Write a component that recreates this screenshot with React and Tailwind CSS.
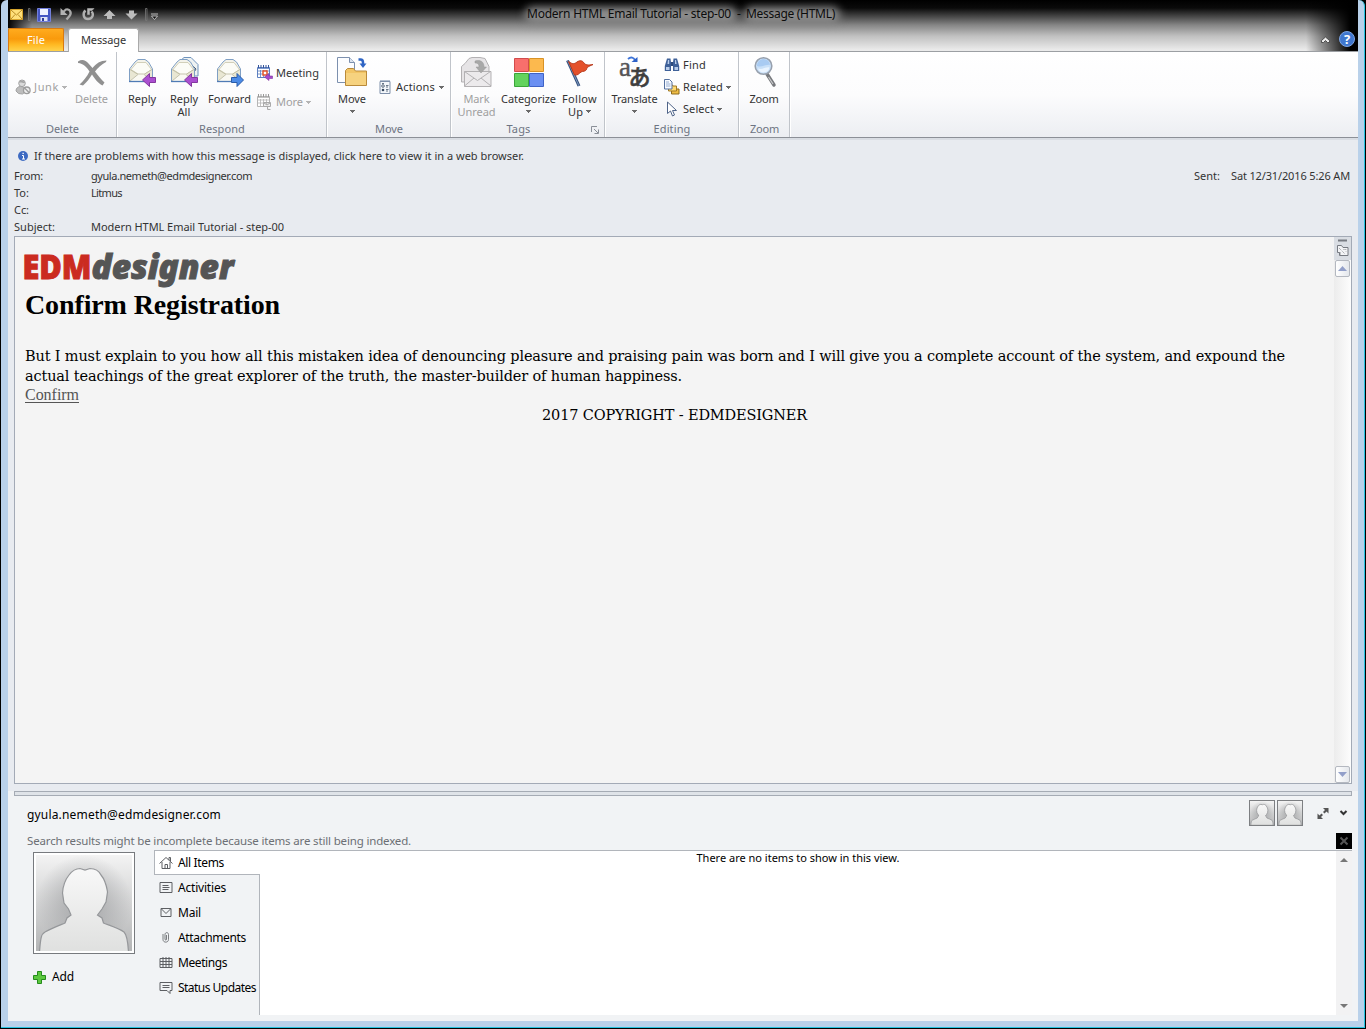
import { useLayoutEffect, useRef } from "react";

const UI = "font-['Noto_Sans','Open_Sans',sans-serif]";

/* Single line of text whose tracking is adjusted so that it fills `w` pixels. */
function Fit({ w, className = "", children }) {
  const ref = useRef(null);
  useLayoutEffect(() => {
    const el = ref.current;
    el.style.letterSpacing = "0px";
    const natural = el.getBoundingClientRect().width;
    el.style.letterSpacing = (w - natural) / String(children).length + "px";
  }, [w, children]);
  return (
    <span ref={ref} className={"inline-block whitespace-pre " + className}>
      {children}
    </span>
  );
}

function Arrow({ dim }) {
  return (
    <svg width="5" height="3" viewBox="0 0 5 3" className="shrink-0" shapeRendering="crispEdges">
      <path d="M0 0h5v1h-1v1h-1v1h-1v-1h-1v-1h-1z" fill={dim ? "#b4b4b4" : "#6a6a6a"} />
    </svg>
  );
}

function Group({ label, lw, width, launcher, children }) {
  return (
    <div className={"flex h-[85px] flex-col border-r border-[#c0c4ca] shadow-[1px_0_0_#fff] " + width}>
      <div className="flex h-[69px]">{children}</div>
      <div className={"relative flex h-4 items-center justify-center text-[#6d7482] " + (launcher ? "pr-[18px]" : "pl-[1px]")}>
        <Fit w={lw}>{label}</Fit>
        {launcher && (
          <svg className="absolute right-[5px] top-[5px]" width="8" height="8" viewBox="0 0 8 8" fill="none" stroke="#8a8f98">
            <path d="M0.5 6V0.5H6" />
            <path d="M3 3l4 4M7.5 3.5v4h-4" />
          </svg>
        )}
      </div>
    </div>
  );
}

function Big({ icon, lines, width, dim, arrow }) {
  return (
    <div className={"flex shrink-0 flex-col items-center pt-1 " + width + (dim ? " text-[#a0a0a0]" : "")}>
      <div className="flex h-8 w-8 shrink-0 items-center justify-center">{icon}</div>
      <div className="mt-[4px] h-[13px] leading-[13px]">
        <Fit w={lines[0][1]}>{lines[0][0]}</Fit>
      </div>
      <div className="flex h-[13px] items-center gap-[3px] leading-[13px]">
        {lines[1] && <Fit w={lines[1][1]}>{lines[1][0]}</Fit>}
        {arrow && <Arrow />}
      </div>
    </div>
  );
}

function Small({ icon, text, w, arrow, dim }) {
  return (
    <div className={"flex h-4 items-center gap-[3px]" + (dim ? " text-[#a0a0a0]" : "")}>
      <div className="w-4 shrink-0">{icon}</div>
      <Fit w={w}>{text}</Fit>
      {arrow && <Arrow dim={dim} />}
    </div>
  );
}

function MailIcon({ all, forward }) {
  return (
    <svg width="32" height="32" viewBox="0 0 32 32">
      {all && <path d="M11 6l5-4.500h7L30 8.500V20h-8" fill="#eef2f2" stroke="#6f93bd" />}
      {all && <path d="M25 10l3 3-3 5" fill="none" stroke="#4d5c70" />}
      <path d="M3.500 13L9 6l3-2.500h7L22.500 6l4 7v12.500h-23z" fill="#f4f3ea" stroke="#7f9fc4" />
      <path d="M5 13.500L11 6.500h9l5.500 7-8 5.500h-4z" fill="#fcfcf6" stroke="#d2d0ba" />
      <path d="M4 13.500l9 5.500h4l9-5.500v11.500H4z" fill="#e9e7d3" />
      <path d="M4 13.500l9 5.500h4l9-5.500" fill="none" stroke="#c2c0a6" />
      <path d="M4 25l8.500-7h5l8.500 7" fill="#faf9f2" stroke="#c6c4ae" />
      <path d="M3 25.500h24" stroke="#4f7bb5" strokeWidth="1.300" />
      {forward ? (
        <path d="M17.500 21.500h5.500v-4l6.500 6.500-6.500 6.500v-4h-5.500z" fill="#4c8be6" stroke="#2a5ca8" />
      ) : (
        <path d="M29.500 21.500h-6v-4l-7 6.500 7 6.500v-4h6z" fill="#aa4fd0" stroke="#84379f" />
      )}
    </svg>
  );
}

function CalendarIcon({ dim }) {
  const c = dim ? "#b5b5b5" : "#5c7fc0";
  return (
    <svg width="16" height="16" viewBox="0 0 16 16">
      <path d="M.5 2.500h12v10H.5z" fill="#fff" stroke={c} />
      <path d="M.5 3.500h12M1 6h11M1 9h11M3.500 5v7M6.500 5v7M9.500 5v7" stroke={c} strokeWidth=".8" />
      <path d="M1.500 0v3M4 0v3M6.500 0v3M9 0v3M11.500 0v3" stroke={dim ? "#999" : "#34549a"} />
      {dim ? (
        <path d="M6.500 8.500h7v4h-7zM7 9l3 2 3-2M10.500 13v2.500h3" fill="#eee" stroke="#aaa" />
      ) : (
        <g>
          <path d="M6 6h4v4H6z" fill="#fff" stroke="#e2552b" strokeWidth="1.500" />
          <path d="M15.500 11H12V8.500L7.500 12l4.500 3.500V13.500h3.500z" fill="#a54acb" stroke="#8236a0" strokeWidth=".6" />
        </g>
      )}
    </svg>
  );
}

function JunkIcon() {
  return (
    <svg width="16" height="16" viewBox="0 0 16 16">
      <path d="M1 12c0-3 2-4.500 4.500-4.500S11 9 11.500 12l-4 3-4-.5z" fill="#bdbdbd" stroke="#a2a2a2" />
      <circle cx="7" cy="4.300" r="3.300" fill="#dadada" stroke="#a2a2a2" />
      <path d="M4 3.500c1-2.500 5-2.500 6 .5-2 .5-3-1-6-.5z" fill="#a5a5a5" />
      <circle cx="11.800" cy="11.300" r="3.300" fill="#eee" stroke="#9c9c9c" strokeWidth="1.300" />
      <path d="M9.500 9l4.800 4.800" stroke="#9c9c9c" strokeWidth="1.300" />
    </svg>
  );
}

function DeleteIcon() {
  return (
    <svg width="32" height="32" viewBox="0 0 32 32">
      <path d="M2 5.500C6 3 9.500 4 12.500 7.500L16.500 12C20 7.500 24.500 4.500 30.500 4.500L30 6C25.500 8.500 22 11.500 19 15.500C22 19.500 25.500 24 28.500 26.500L26.500 29.500C21.500 27 19 23 16 18.500C13.500 22.500 10.500 26.500 7 29.500L3.500 28.500C7.500 25 11 20.500 13.500 15.500C10.500 11 7.500 7.500 2 7z" fill="#909090" />
    </svg>
  );
}

function MoveIcon() {
  return (
    <svg width="32" height="32" viewBox="0 0 32 32">
      <path d="M1.500 1.500h12l5 5v20h-17z" fill="#fcfdff" stroke="#7c90ae" />
      <path d="M13.500 1.500v5h5" fill="#dbe4f1" stroke="#7c90ae" />
      <path d="M9.500 29.500v-15l2-2h6l2 2.500h11v14.500z" fill="#f2c566" stroke="#b98a3a" />
      <path d="M10 17h20v12H10z" fill="#f6d27f" />
      <path d="M22.500 3.500h2c1.500 0 2.500 1 2.500 3V8" fill="none" stroke="#2f65c4" strokeWidth="2.500" />
      <path d="M23.500 7.500h7L27 12z" fill="#2f65c4" />
    </svg>
  );
}

function UnreadIcon() {
  return (
    <svg width="32" height="32" viewBox="0 0 32 32" fill="#e6e4e6" stroke="#b3b1b3">
      <path d="M.500 10.500L4 7.500l4-5 3-1h8l5 1 4 8v15.500H.500z" />
      <path d="M3.500 15.500h26.500v15H3.500z" fill="#eceaec" />
      <path d="M3.500 15.500l13 9 13-9M3.500 30l9.500-8M30 30l-10-8" fill="none" />
      <path d="M14 5c6-1.500 9 1 9 6h2.500L20 17l-5-6h3c0-3-1-4-4-4z" fill="#a8a8a8" stroke="#999" strokeWidth=".5" />
    </svg>
  );
}

function CategorizeIcon() {
  return (
    <svg width="32" height="32" viewBox="0 0 32 32">
      <path d="M1.500 2.500h14v13h-14z" fill="#f86f6c" stroke="#d24c4c" />
      <path d="M16.500 2.500h14v13h-14z" fill="#fcb94e" stroke="#d99225" />
      <path d="M1.500 17.500h14v13h-14z" fill="#63d35d" stroke="#3ba53a" />
      <path d="M16.500 17.500h14v13h-14z" fill="#6a8ff2" stroke="#3f63c6" />
    </svg>
  );
}

function FlagIcon() {
  return (
    <svg width="32" height="32" viewBox="0 0 32 32">
      <path d="M3.500 4.500L15 30" stroke="#35527f" strokeWidth="3" />
      <path d="M3.500 4.500L15 30" stroke="#7c95bb" strokeWidth="1" />
      <path d="M4.500 5.500c4 3 6 2.500 8.500.5 3-2 5.500-1.500 7 1 1.500 2 4 2.500 9 1.500-4.500 2-6 2.500-6.500 5-1 2-3.500 1.500-5.500 2.500-2 1.500-3 3.500-6.500 3z" fill="#e4512b" stroke="#b93a1c" />
    </svg>
  );
}

function TranslateIcon() {
  return (
    <svg className="overflow-visible" width="48" height="40" viewBox="-8 -4 48 40">
      <text x="0" y="20" fontSize="27" fontFamily="Liberation Serif, serif" fill="#555" stroke="#555" strokeWidth=".4">a</text>
      <text x="9.500" y="28.500" fontSize="22" fontWeight="500" fontFamily="Noto Sans CJK JP, sans-serif" fill="#3e3e3e" stroke="#3e3e3e" strokeWidth=".6">あ</text>
      <path d="M9 3c3-2.500 5.500-1.500 7 1" fill="none" stroke="#3e74d8" strokeWidth="2" />
      <path d="M12.500 6h6V1z" fill="#2d61c8" />
    </svg>
  );
}

function ZoomIcon() {
  return (
    <svg width="32" height="32" viewBox="0 0 32 32">
      <path d="M19 18l7 11" stroke="#77797d" strokeWidth="3.500" strokeLinecap="round" />
      <path d="M20.500 21l4.500 7" stroke="#c9cacc" strokeWidth="1.200" />
      <circle cx="15.500" cy="10" r="8.300" fill="#c9e0f8" stroke="#97a0ad" strokeWidth="1.600" />
      <path d="M9 10a6.500 6.500 0 0 1 13-1c-4-1-8 3-13 1z" fill="#a9cbf2" />
      <path d="M10 12.500c5 1.500 8-2 11.500-1a6 6 0 0 1-11.500 1z" fill="#eaf4ff" />
    </svg>
  );
}

function ActionsIcon() {
  return (
    <svg width="12" height="14" viewBox="0 0 12 14">
      <path d="M1 1.500h10v12H1z" fill="#f4f7fb" stroke="#7f90aa" />
      <path d="M1 .5h10" stroke="#b4c0d0" />
      <circle cx="4" cy="6" r="1.300" fill="#fff" stroke="#34465e" strokeWidth=".8" />
      <circle cx="4" cy="10" r="1.300" fill="#34465e" />
      <path d="M7 5.500h2.500M7 7h2M7 9.500h2.500M7 11h2M3 3.500h2" stroke="#45566c" strokeWidth=".8" />
    </svg>
  );
}

function FindIcon() {
  return (
    <svg width="16" height="16" viewBox="0 0 16 16">
      <path d="M3 1.500h3.500l.5 4V14H.8V9zM13 1.500H9.500l-.5 4V14h6.200V9z" fill="#3f6199" />
      <path d="M7 5h2v4H7z" fill="#2e4b7c" />
      <path d="M2 10h3.500v3H2zM10.500 10H14v3h-3.500zM4 3h1.200v4H3.500zM11 3h1l.6 4H11z" fill="#b9cdea" />
    </svg>
  );
}

function RelatedIcon() {
  return (
    <svg width="16" height="16" viewBox="0 0 16 16">
      <path d="M7.500 8.500h3l1 1.500h3.500v5H7.500z" fill="#f0bd45" stroke="#8d6a1f" />
      <path d="M4.500 5.500h3.500l1 1.500h3.500v5h-8z" fill="#ffd970" stroke="#a17a25" />
      <path d="M.5.500h5l2.500 2.500v7H.5z" fill="#f7faff" stroke="#55719f" />
      <path d="M2 3h3M2 5h4.500M2 7h4.500" stroke="#7e9ac5" strokeWidth=".8" />
    </svg>
  );
}

function SelectIcon() {
  return (
    <svg width="16" height="16" viewBox="0 0 16 16">
      <path d="M3.500 1v11.500l3-2.500 2 5 2-1-2-4.500h4z" fill="#fff" stroke="#4f6488" strokeWidth="1" />
    </svg>
  );
}

function Person({ size, id }) {
  return (
    <svg width={size} height={size} viewBox="0 0 96 96">
      <defs>
        <linearGradient id={id + "b"} x1="0" y1="0" x2="0" y2="1"><stop offset="0" stopColor="#f3f3f3" /><stop offset="1" stopColor="#b4b5b6" /></linearGradient>
        <radialGradient id={id + "r"} cx=".5" cy=".5" r=".5"><stop offset=".4" stopColor="#8b8d90" stopOpacity=".4" /><stop offset="1" stopColor="#8b8d90" stopOpacity="0" /></radialGradient>
        <linearGradient id={id + "p"} x1="0" y1="0" x2="0" y2="1"><stop offset="0" stopColor="#f8f8f8" /><stop offset="1" stopColor="#dfe0df" /></linearGradient>
      </defs>
      <path d="M0 0h96v96H0z" fill={`url(#${id}b)`} />
      <path d="M0 0h96v96H0z" fill={`url(#${id}r)`} />
      <path d="M3.500 97C4.500 84 5 79 9 77C16 73 23 70.500 29 68L31 63L35 60L32.500 54L28 48L26.500 38C27 30 29 25 33 20C36 16 39 13.500 44 13.500L49 15L54 13.500C60 13.500 63 16 65 20C70 26 70.500 31 71.500 37L70 47L66 54L61.500 60L66 63L67.500 68C75 71 82 73 88 77C91 80 92 88 92.500 97Z" fill={`url(#${id}p)`} stroke="#95979a" strokeWidth={size < 40 ? 3 : 1.2} />
    </svg>
  );
}

const tabIcons = {
  home: <path d="M0 7.500L6.500 1.500 13 7.500M9.500 4V1.500h1.500v4M2.500 6v6.500h8V6M5.500 12.500v-4h2.500v4" />,
  list: <path d="M.5 1.500h12v10H.5zM3 4.500h6M3 6.500h7M3 8.500h6" />,
  mail: <path d="M1.500 2.500h10v8h-10zM2 3l4.500 4.500L11 3" />,
  clip: <path d="M3.500 3v5.500c0 3.500 5.500 3.500 5.500 0v-5c0-2.500-3.500-2.500-3.500 0v4.500c0 1.500 1.500 1.500 1.500 0V4" strokeWidth=".8" />,
  grid: <path d="M.5 2.500h12v9H.5zM.5 5.500h12M.5 8.500h12M3.500 1v10.500M6.500 1v10.500M9.500 1v10.500" />,
  chat: <path d="M.5 1.500h12v8h-2v3l-3-3h-7zM3 4.500h7M3 6.500h7" />,
};

const tabs = [
  ["home", "All Items", 46],
  ["list", "Activities", 48],
  ["mail", "Mail", 23],
  ["clip", "Attachments", 68],
  ["grid", "Meetings", 49],
  ["chat", "Status Updates", 78],
];

function TitleBar() {
  return (
    <div className="relative h-[52px] border-b border-[#9c9fa3] bg-[linear-gradient(to_bottom,#000_0px,#0a0a0a_8px,#3c3c3c_15px,#858585_25px,#c0c0c0_36px,#ebebeb_50px)]">
      <div className="absolute inset-y-0 right-0 w-[52px] bg-[linear-gradient(to_right,transparent,#000_85%)]" />
      <div className="absolute left-0 top-0 h-7 w-6 bg-[linear-gradient(to_right,#000,transparent)]" />
      <div className="absolute left-[517px] top-[7px] h-[16px] w-[212px] rounded-full bg-[#8e8e8e] blur-[4px]" />
      <div className="absolute left-[736px] top-[7px] h-[16px] w-[96px] rounded-full bg-[#8e8e8e] blur-[4px]" />
      <div className="relative flex h-[28px]">
        <svg width="160" height="28" viewBox="8 0 160 28">
          <path d="M10.500 9.500h12v10h-12z" fill="#ffe07a" stroke="#d7a52d" />
          <path d="M11 10l5.500 5 5.500-5M11 19l4-4.500M22 19l-4-4.500" fill="none" stroke="#b98c25" />
          <path d="M28.500 8.500h1.500v12h-1.500zM145.500 8.500h1.500v12h-1.500z" fill="none" stroke="#777" strokeWidth=".8" />
          <path d="M37.500 8.500h13v13h-13z" fill="#4556c4" stroke="#7380da" />
          <path d="M40 9h8v6h-8z" fill="#eef1ff" />
          <path d="M40.500 17h7v4h-7z" fill="#dfe3f5" />
          <path d="M42 18h2v3h-2z" fill="#303c98" />
          <path d="M62 13l4-3.500c4-1 6 3.500 3.500 6.500l-3 3.500" fill="none" stroke="#a9a9a9" strokeWidth="2.300" />
          <path d="M60.500 8v7h7z" fill="#b3b3b3" />
          <path d="M85.500 10.500c-3 2.500-2.500 8.500 2.500 8.500s6-5 3.500-7.500" fill="none" stroke="#b0b0b0" strokeWidth="2.400" />
          <path d="M87.500 8.500h6.500l-2 2h-2.500v4h-2z" fill="#b8b8b8" stroke="#b8b8b8" strokeWidth=".5" />
          <path d="M109.500 10l6 6h-3.500v3h-5v-3h-3.500z" fill="#bcbcbc" />
          <path d="M131.500 19.500l6-6h-3.500v-3h-5v3h-3.500z" fill="#bcbcbc" />
          <path d="M151 14h7M151.500 16h6l-3 3.500z" fill="#111" stroke="#ddd" strokeWidth=".8" />
        </svg>
        <div className="absolute left-[519px] top-[5px] flex h-[18px] items-center text-[12px] leading-[18px] text-[#0c0c0c]">
          <Fit w={204}>Modern HTML Email Tutorial - step-00</Fit>
          <Fit w={4} className="ml-[6px]">-</Fit>
          <Fit w={89} className="ml-[5px]">Message (HTML)</Fit>
        </div>
      </div>
      <div className="relative flex h-[23px]">
        <div className="flex w-14 items-center justify-center rounded-t-[2px] border border-b-0 border-[#d97a10] bg-[linear-gradient(to_bottom,#ffab1e,#f99a0c_45%,#ffb822_70%,#ffd24a)] text-white">
          <Fit w={18}>File</Fit>
        </div>
        <div className="ml-[4px] flex h-[24px] w-[71px] items-center justify-center rounded-t-[3px] border border-b-0 border-[#aaa] bg-white">
          <Fit w={45}>Message</Fit>
        </div>
        <svg className="ml-auto" width="44" height="23" viewBox="0 0 44 23">
          <path d="M7.500 14.500v-2L11.500 9l4 3.500v2h-2l-2-2-2 2z" fill="#eee" stroke="#444" strokeWidth=".9" />
          <circle cx="33" cy="11" r="7.500" fill="#3f77cf" stroke="#7da5e4" />
          <text x="33" y="15.800" fontSize="13" fontWeight="700" textAnchor="middle" fill="#fff" fontFamily="Noto Sans, sans-serif">?</text>
        </svg>
      </div>
    </div>
  );
}

function Ribbon() {
  return (
    <div className="flex h-[86px] border-b border-[#8c9097] bg-[linear-gradient(to_bottom,#fff,#fcfcfd_50%,#eceef2)] text-[11px] text-[#333]">
      <Group label="Delete" lw={33} width="w-[109px]">
        <div className="flex w-[67px] items-start pl-[7px] pt-[27px]">
          <Small icon={<JunkIcon />} text="Junk" w={25} arrow dim />
        </div>
        <Big icon={<DeleteIcon />} lines={[["Delete", 33]]} width="w-[33px]" dim />
      </Group>
      <Group label="Respond" lw={46} width="w-[210px]">
        <div className="flex pl-[11px]">
          <Big icon={<MailIcon />} lines={[["Reply", 28]]} width="w-7" />
          <div className="w-[14px]" />
          <Big icon={<MailIcon all />} lines={[["Reply", 28], ["All", 13]]} width="w-7" />
          <div className="w-[10px]" />
          <Big icon={<MailIcon forward />} lines={[["Forward", 43]]} width="w-[43px]" />
          <div className="flex flex-col gap-[13px] pl-[6px] pt-[13px]">
            <Small icon={<CalendarIcon />} text="Meeting" w={43} />
            <Small icon={<CalendarIcon dim />} text="More" w={27} arrow dim />
          </div>
        </div>
      </Group>
      <Group label="Move" lw={28} width="w-[124px]">
        <div className="flex pl-[9px]">
          <Big icon={<MoveIcon />} lines={[["Move", 28]]} width="w-8" arrow />
          <div className="mt-[27px] flex h-4 items-center gap-[4px] pl-[11px]">
            <ActionsIcon />
            <Fit w={39} className="ml-px">Actions</Fit>
            <Arrow />
          </div>
        </div>
      </Group>
      <Group label="Tags" lw={24} width="w-[154px]" launcher>
        <div className="flex gap-[5px] pl-[6px]">
          <Big icon={<UnreadIcon />} lines={[["Mark", 26], ["Unread", 38]]} width="w-[39px]" dim />
          <Big icon={<CategorizeIcon />} lines={[["Categorize", 55]]} width="w-[55px]" arrow />
          <Big icon={<FlagIcon />} lines={[["Follow", 35], ["Up", 15]]} width="w-[37px]" arrow />
        </div>
      </Group>
      <Group label="Editing" lw={37} width="w-[134px]">
        <div className="flex gap-[6px] pl-[6px]">
          <Big icon={<TranslateIcon />} lines={[["Translate", 46]]} width="w-[47px]" arrow />
          <div className="flex flex-col gap-[6px] pt-[5px]">
            <Small icon={<FindIcon />} text="Find" w={23} />
            <Small icon={<RelatedIcon />} text="Related" w={40} arrow />
            <Small icon={<SelectIcon />} text="Select" w={31} arrow />
          </div>
        </div>
      </Group>
      <Group label="Zoom" lw={29} width="w-[51px]">
        <Big icon={<ZoomIcon />} lines={[["Zoom", 29]]} width="w-[50px]" />
      </Group>
    </div>
  );
}

function Field({ label, lw, value, vw, children }) {
  return (
    <div className="flex h-[17px] items-center pl-[6px]">
      <div className="flex w-[77px]"><Fit w={lw}>{label}</Fit></div>
      {value && <Fit w={vw}>{value}</Fit>}
      {children}
    </div>
  );
}

function ScrollButton({ up }) {
  return (
    <div className="flex h-[17px] w-[15px] items-center justify-center rounded-[2px] border border-[#b4b8c0] bg-[linear-gradient(to_right,#fff,#e4e7ec)]">
      <svg width="9" height="5" viewBox="0 0 9 5"><path d={up ? "M0 5L4.500 0 9 5z" : "M0 0L4.500 5 9 0z"} fill="#929fc9" /></svg>
    </div>
  );
}

function Message() {
  return (
    <div className="mx-[6px] flex h-[548px] border border-[#a3aab6] bg-[#f4f4f4]">
      <div className="min-w-0 flex-1 pl-[10px] text-black">
        <svg className="-ml-[6px] mt-[6px] block overflow-visible" width="230" height="47" viewBox="-6 -5 230 47">
          <g fontFamily="Noto Sans, Open Sans, sans-serif">
            <text x="-2.500" y="31" fontSize="33" fontWeight="900" fill="#cb2b20" stroke="#cb2b20" strokeWidth="1" textLength="69" lengthAdjust="spacingAndGlyphs">EDM</text>
            <text x="66.500" y="30.500" fontSize="33" fontWeight="900" fontStyle="italic" fill="#555" stroke="#555" strokeWidth="1" textLength="142" lengthAdjust="spacingAndGlyphs">designer</text>
          </g>
        </svg>
        <h1 className="h-[30px] font-['Liberation_Serif',serif] text-[28px] font-bold leading-[30px]"><Fit w={255}>Confirm Registration</Fit></h1>
        <div className="mt-[26px] font-['DejaVu_Serif',serif] text-[14.5px] leading-5">
          <div className="h-5"><Fit w={1260}>But I must explain to you how all this mistaken idea of denouncing pleasure and praising pain was born and I will give you a complete account of the system, and expound the</Fit></div>
          <div className="h-5"><Fit w={657}>actual teachings of the great explorer of the truth, the master-builder of human happiness.</Fit></div>
          <div className="h-[18px] font-['Liberation_Serif',serif] text-[16px] leading-[17px] text-[#555]"><Fit w={54} className="underline underline-offset-2">Confirm</Fit></div>
          <div className="flex h-5 justify-center pr-[10px] pt-[1px]"><Fit w={265}>2017 COPYRIGHT - EDMDESIGNER</Fit></div>
        </div>
      </div>
      <div className="flex w-[17px] flex-col items-center bg-[linear-gradient(to_right,#ececec,#fdfdfd)]">
        <div className="flex h-[23px] w-full shrink-0 justify-center bg-[#d9dde3]">
          <svg width="13" height="23" viewBox="0 0 13 23" fill="#f3f4f6" stroke="#777b82">
            <path d="M2 3.500h9" strokeWidth="2" />
            <path d="M1.500 8.500h4l1.500 2h5v8H3.500v-3h-2z" />
            <path d="M3 11l6 6M7.500 12.500h2.500v2M4 15v2h2" strokeWidth=".8" strokeDasharray="1 1" />
          </svg>
        </div>
        <ScrollButton up />
        <div className="flex-1" />
        <ScrollButton />
      </div>
    </div>
  );
}

function PeoplePane() {
  return (
    <div className="flex h-[230px] flex-col bg-[#f1f3f5] px-[6px] text-[12px] text-black">
      <div className="h-[5px] shrink-0 border border-[#a5abb4] bg-[#dfe3e8]" />
      <div className="flex h-[36px] shrink-0 pl-[13px]">
        <div className="flex h-[38px] items-center"><Fit w={194}>gyula.nemeth@edmdesigner.com</Fit></div>
        <div className="ml-auto flex gap-[2px] pt-[4px]">
          <div className="h-[26px] w-[26px] border border-[#7d7f82]"><Person size={24} id="s" /></div>
          <div className="h-[26px] w-[26px] border border-[#7d7f82]"><Person size={24} id="t" /></div>
        </div>
        <svg className="ml-[14px] mt-[11px]" width="35" height="13" viewBox="0 0 35 13">
          <path d="M6 1h5.500v5.500l-2-2-2 2-1.500-1.500 2-2zM.5 6.500l2 2 2-2L6 8 4 10l2 2H.5z" fill="#555" />
          <path d="M23.500 4l3 3 3-3" fill="none" stroke="#333" strokeWidth="2" />
        </svg>
      </div>
      <div className="flex h-[18px] shrink-0 items-start pl-[13px] text-[11.5px] leading-[17px] text-[#6c6f74]">
        <Fit w={384}>Search results might be incomplete because items are still being indexed.</Fit>
        <div className="ml-auto mt-[1px] flex h-4 w-4 items-center justify-center bg-black">
          <svg width="10" height="10" viewBox="0 0 10 10"><path d="M1.500 1.500l7 7M8.500 1.500l-7 7" stroke="#555" strokeWidth="2" /></svg>
        </div>
      </div>
      <div className="flex h-[165px] shrink-0">
        <div className="w-[140px] pl-[19px] pt-[2px]">
          <div className="h-[102px] w-[102px] border border-[#777a7e] bg-white p-[2px]"><Person size={96} id="l" /></div>
          <div className="mt-[14px] flex h-[18px] items-center gap-[6px]">
            <svg width="13" height="13" viewBox="0 0 13 13"><path d="M4.500.5h4v4h4v4h-4v4h-4v-4h-4v-4h4z" fill="#5cc83e" stroke="#258b1c" /></svg>
            <Fit w={22}>Add</Fit>
          </div>
        </div>
        <div className="flex w-[106px] flex-col">
          {tabs.map(([icon, text, w], i) => (
            <div key={text} className={"flex h-[25px] shrink-0 items-center gap-[4px] pl-1 " + (i === 0 ? "border border-r-0 border-[#b1b5bb] bg-white" : "border-r border-[#b1b5bb] pl-[5px]")}>
              <svg width="15" height="14" viewBox="-0.500 0 15 14" fill="none" stroke="#5d5f63">{tabIcons[icon]}</svg>
              <Fit w={w}>{text}</Fit>
            </div>
          ))}
          <div className="flex-1 border-r border-[#b1b5bb]" />
        </div>
        <div className="flex-1 border-t border-[#b1b5bb] bg-white text-center text-[11px] leading-[14px]">
          <Fit w={203}>There are no items to show in this view.</Fit>
        </div>
        <div className="flex w-4 flex-col items-center justify-between border-t border-[#b1b5bb] bg-[#f2f2f3] py-[7px]">
          <svg width="8" height="4" viewBox="0 0 8 4"><path d="M0 4l4-4 4 4z" fill="#777" /></svg>
          <svg width="8" height="4" viewBox="0 0 8 4"><path d="M0 0l4 4 4-4z" fill="#777" /></svg>
        </div>
      </div>
    </div>
  );
}

export default function App() {
  return (
    <div className={"flex h-[1029px] w-[1366px] flex-col bg-black pl-[1px] text-[11px] text-[#333] " + UI}>
      <div className="mr-[1px] flex h-[1028px] flex-col rounded-t-[6px] border-b border-r border-[#27c3e0] bg-[#b9d1ea] pl-[7px] pr-[6px]">
        <TitleBar />
        <Ribbon />
        <div className="flex h-[98px] flex-col border-t-2 border-[#d9dde3] bg-[#e8ebf0] pt-[8px]">
          <div className="flex h-[16px] shrink-0 items-center gap-[6px] pl-[10px]">
            <svg width="10" height="10" viewBox="0 0 10 10"><circle cx="5" cy="5" r="5" fill="#3d6ac2" /><path d="M4 4.500h1.500V8M4 8h3" stroke="#fff" fill="none" /><path d="M4.500 1.800h1.300v1.300H4.500z" fill="#fff" /></svg>
            <Fit w={490}>If there are problems with how this message is displayed, click here to view it in a web browser.</Fit>
          </div>
          <div className="mt-[4px]">
            <Field label="From:" lw={29} value="gyula.nemeth@edmdesigner.com" vw={161}>
              <div className="ml-auto flex gap-[11px] pr-[8px]">
                <Fit w={26}>Sent:</Fit>
                <Fit w={119}>Sat 12/31/2016 5:26 AM</Fit>
              </div>
            </Field>
            <Field label="To:" lw={15} value="Litmus" vw={31} />
            <Field label="Cc:" lw={15} />
            <Field label="Subject:" lw={41} value="Modern HTML Email Tutorial - step-00" vw={193} />
          </div>
        </div>
        <div className="bg-[#e8ebf0] pb-[7px]"><Message /></div>
        <PeoplePane />
      </div>
    </div>
  );
}
